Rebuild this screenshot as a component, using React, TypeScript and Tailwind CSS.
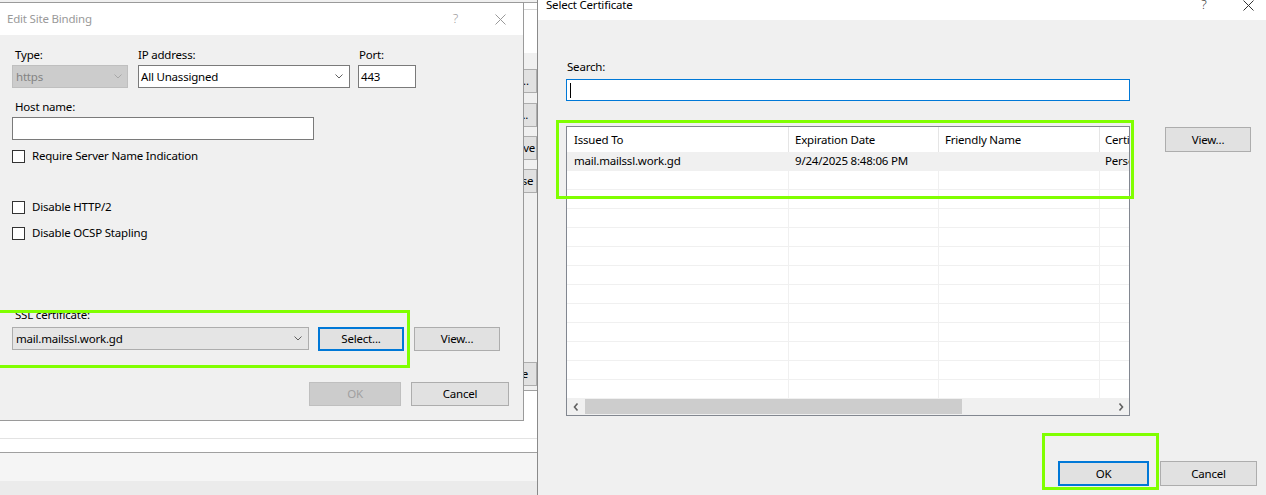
import React from "react";

const Chevron = ({ color = "#606060" }: { color?: string }) => (
  <svg width="8" height="5" viewBox="0 0 8 5" className="shrink-0">
    <polyline points="0.5,0.5 4,4 7.5,0.5" fill="none" stroke={color} strokeWidth="1" />
  </svg>
);

const CloseX = ({ color }: { color: string }) => (
  <svg width="11" height="11" viewBox="0 0 11 11">
    <path d="M0.5 0.5 L10.5 10.5 M10.5 0.5 L0.5 10.5" stroke={color} strokeWidth="1" fill="none" />
  </svg>
);

const ArrowL = () => (
  <svg width="6" height="8" viewBox="0 0 6 8">
    <polyline points="4.5,0.5 1.5,4 4.5,7.5" fill="none" stroke="#606060" strokeWidth="1.6" />
  </svg>
);
const ArrowR = () => (
  <svg width="6" height="8" viewBox="0 0 6 8">
    <polyline points="1.5,0.5 4.5,4 1.5,7.5" fill="none" stroke="#606060" strokeWidth="1.6" />
  </svg>
);

const Checkbox = ({ label, className = "" }: { label: string; className?: string }) => (
  <div className={`flex items-center h-[16px] ${className}`}>
    <div className="w-[13px] h-[13px] border border-[#333333] bg-white shrink-0" />
    <span className="ml-[7px] leading-[16px]">{label}</span>
  </div>
);

const BgButton = ({ label, className = "" }: { label: string; className?: string }) => (
  <div
    className={`w-[90px] h-[24px] border border-[#adadad] bg-[#e1e1e1] flex items-center justify-center pl-[44px] whitespace-nowrap overflow-hidden ${className}`}
  >
    {label}
  </div>
);

export default function App() {
  const rows = Array.from({ length: 13 });
  return (
    <div className="relative w-[1266px] h-[495px] overflow-hidden flex bg-white text-[11.5px] tracking-[-0.2px] text-black font-['Noto_Sans',sans-serif]">
      {/* Left: background IIS window with Edit Site Binding dialog */}
      <div className="relative w-[537px] h-full shrink-0 flex flex-col">
        <div className="h-[53px] bg-white shrink-0">
          <div className="h-[3px] bg-[#f0f0f0] border-b border-[#a0a0a0]" />
          <div className="h-[7px] border-b border-[#d6d6d6]" />
        </div>
        <div className="h-[337px] bg-[#f0f0f0] flex flex-col items-end pt-[16px] shrink-0">
          <BgButton label="Add..." />
          <BgButton label="Edit..." className="mt-[10px]" />
          <BgButton label="Remove" className="mt-[9px]" />
          <BgButton label="Browse" className="mt-[9px]" />
          <BgButton label="Close" className="mt-[169px]" />
        </div>
        <div className="h-[48px] bg-white border-t border-[#a0a0a0] shrink-0" />
        <div className="h-[14px] bg-white border-t border-[#e3e3e3] shrink-0" />
        <div className="h-[29px] bg-[#f5f5f5] border-t border-[#a0a0a0] shrink-0" />
        <div className="flex-1 bg-[#ebebeb]" />

        {/* Edit Site Binding dialog */}
        <div className="absolute left-0 top-[2px] w-[524px] h-[419px] border-t border-r border-b border-[#9a9a9a] flex flex-col">
          <div className="h-[32px] bg-white flex items-center shrink-0">
            <span className="pl-[7px] text-[#999999]">Edit Site Binding</span>
            <div className="flex-1" />
            <div className="w-[45px] flex justify-center text-[#999999] text-[13px] font-light">?</div>
            <div className="w-[45px] flex justify-center">
              <CloseX color="#999999" />
            </div>
          </div>
          <div className="flex-1 bg-[#f0f0f0] pl-[12px] pt-[12px] flex flex-col">
            <div className="flex">
              <div className="w-[116px] flex flex-col">
                <span className="h-[16px] leading-[16px] pl-[3px]">Type:</span>
                <div className="mt-[2px] h-[23px] border border-[#bfbfbf] bg-[#cccccc] flex items-center pl-[3px] pr-[5px] text-[#838383]">
                  <span className="flex-1">https</span>
                  <Chevron color="#a8a8a8" />
                </div>
              </div>
              <div className="w-[212px] ml-[10px] flex flex-col">
                <span className="h-[16px] leading-[16px]">IP address:</span>
                <div className="mt-[2px] h-[23px] border border-[#7a7a7a] bg-white flex items-center pl-[2px] pr-[6px]">
                  <span className="flex-1">All Unassigned</span>
                  <Chevron />
                </div>
              </div>
              <div className="w-[58px] ml-[8px] flex flex-col">
                <span className="h-[16px] leading-[16px] pl-[1px]">Port:</span>
                <div className="mt-[2px] h-[23px] border border-[#7a7a7a] bg-white flex items-center pl-[2px]">
                  443
                </div>
              </div>
            </div>
            <span className="mt-[11px] h-[16px] leading-[16px] pl-[3px]">Host name:</span>
            <div className="mt-[2px] w-[302px] h-[23px] border border-[#7a7a7a] bg-white" />
            <Checkbox label="Require Server Name Indication" className="mt-[8px]" />
            <Checkbox label="Disable HTTP/2" className="mt-[35px]" />
            <Checkbox label="Disable OCSP Stapling" className="mt-[10px]" />
            <span className="mt-[66px] h-[16px] leading-[16px] pl-[3px]">SSL certificate:</span>
            <div className="mt-[4px] flex items-start">
              <div className="w-[297px] h-[23px] border border-[#adadad] bg-[#e5e5e5] flex items-center pl-[3px] pr-[6px]">
                <span className="flex-1">mail.mailssl.work.gd</span>
                <Chevron />
              </div>
              <div className="ml-[9px] w-[86px] h-[24px] border-2 border-[#0078d7] bg-[#e1e1e1] flex items-center justify-center">
                Select...
              </div>
              <div className="ml-[10px] w-[86px] h-[24px] border border-[#adadad] bg-[#e1e1e1] flex items-center justify-center">
                View...
              </div>
            </div>
            <div className="mt-[31px] flex justify-end pr-[14px]">
              <div className="w-[92px] h-[24px] border border-[#bfbfbf] bg-[#cccccc] flex items-center justify-center text-[#a0a0a0]">
                OK
              </div>
              <div className="ml-[10px] w-[98px] h-[24px] border border-[#adadad] bg-[#e1e1e1] flex items-center justify-center">
                Cancel
              </div>
            </div>
          </div>
        </div>
      </div>

      {/* Right: Select Certificate dialog */}
      <div className="flex-1 min-w-0 h-full border-l border-[#8a8a8a] bg-[#f0f0f0] flex flex-col">
        <div className="h-[20px] bg-white overflow-hidden shrink-0">
          <div className="-mt-[11px] h-[32px] flex items-center pl-[8px] -mr-[4px]">
            <span>Select Certificate</span>
            <div className="flex-1" />
            <div className="w-[44px] flex justify-center text-[13px] text-[#333333] font-light">?</div>
            <div className="w-[44px] flex justify-center">
              <CloseX color="#333333" />
            </div>
          </div>
        </div>
        <div className="pl-[28px] pt-[39px] flex flex-col">
          <span className="h-[16px] leading-[16px] pl-[1px]">Search:</span>
          <div className="mt-[4px] w-[564px] h-[22px] border border-[#0078d7] bg-white flex items-center pl-[3px]">
            <div className="w-[1px] h-[15px] bg-black" />
          </div>
          <div className="mt-[25px] flex items-start">
            <div className="w-[564px] h-[290px] border border-[#828790] bg-white flex flex-col">
              <div className="h-[25px] flex shrink-0">
                <div className="w-[222px] border-r border-[#e5e5e5] flex items-center pl-[7px]">Issued To</div>
                <div className="w-[150px] border-r border-[#e5e5e5] flex items-center pl-[6px]">Expiration Date</div>
                <div className="w-[161px] border-r border-[#e5e5e5] flex items-center pl-[6px]">Friendly Name</div>
                <div className="flex-1 min-w-0 flex items-center pl-[5px] overflow-hidden whitespace-nowrap">
                  <span className="block overflow-hidden">Certificate Store</span>
                </div>
              </div>
              <div className="h-[246px] overflow-hidden shrink-0">
                {rows.map((_, i) => (
                  <div
                    key={i}
                    className={`h-[19px] flex border-b border-[#f0f0f0] ${i === 0 ? "bg-[#f0f0f0]" : "bg-white"}`}
                  >
                    <div className="w-[222px] border-r border-[#f0f0f0] flex items-center pl-[7px]">
                      {i === 0 ? "mail.mailssl.work.gd" : ""}
                    </div>
                    <div className="w-[150px] border-r border-[#f0f0f0] flex items-center pl-[6px]">
                      {i === 0 ? "9/24/2025 8:48:06 PM" : ""}
                    </div>
                    <div className="w-[161px] border-r border-[#f0f0f0] flex items-center pl-[6px]" />
                    <div className="flex-1 min-w-0 flex items-center pl-[5px] overflow-hidden whitespace-nowrap">
                      {i === 0 ? <span className="block overflow-hidden">Personal</span> : null}
                    </div>
                  </div>
                ))}
              </div>
              <div className="h-[17px] bg-[#f0f0f0] flex shrink-0">
                <div className="w-[17px] flex items-center justify-center">
                  <ArrowL />
                </div>
                <div className="flex-1 py-[1px] flex">
                  <div className="ml-[1px] w-[377px] h-full bg-[#cdcdcd]" />
                </div>
                <div className="w-[17px] flex items-center justify-center">
                  <ArrowR />
                </div>
              </div>
            </div>
            <div className="ml-[35px] mt-[1px] w-[86px] h-[25px] border border-[#adadad] bg-[#e1e1e1] flex items-center justify-center">
              View...
            </div>
          </div>
          <div className="mt-[45px] flex justify-end pr-[9px]">
            <div className="w-[91px] h-[25px] border-2 border-[#0078d7] bg-[#e1e1e1] flex items-center justify-center">
              OK
            </div>
            <div className="ml-[11px] w-[97px] h-[25px] border border-[#adadad] bg-[#e1e1e1] flex items-center justify-center">
              Cancel
            </div>
          </div>
        </div>
      </div>

      {/* Highlight annotations */}
      <div className="absolute left-[-3px] top-[310px] w-[413px] h-[58px] border-[3px] border-[#80ff00] pointer-events-none" />
      <div className="absolute left-[556px] top-[120px] w-[578px] h-[79px] border-[3px] border-[#80ff00] pointer-events-none" />
      <div className="absolute left-[1042px] top-[433px] w-[117px] h-[57px] border-[3px] border-[#80ff00] pointer-events-none" />
    </div>
  );
}
